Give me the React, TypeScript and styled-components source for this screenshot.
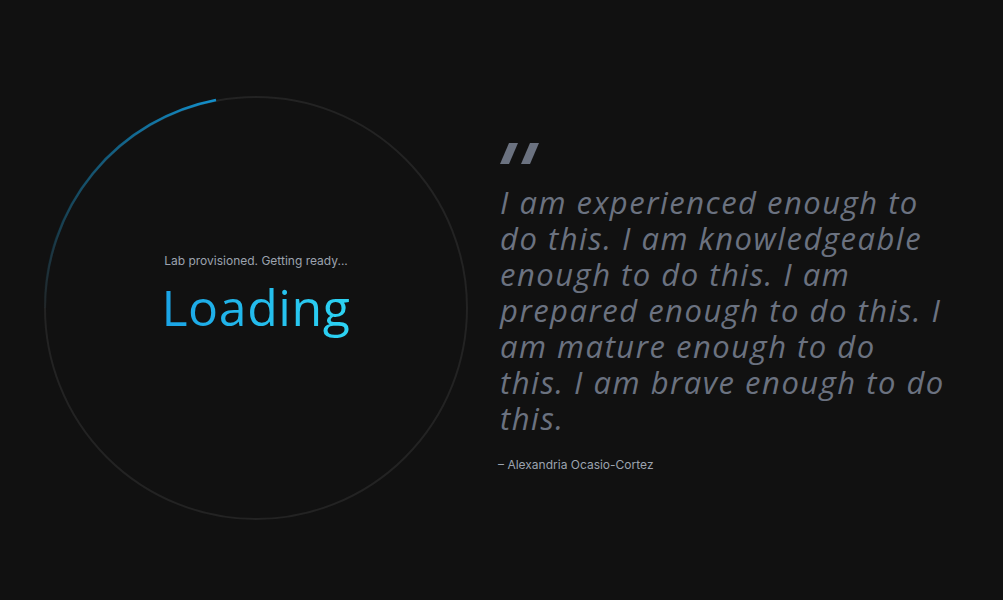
import React from "react";
import styled, { createGlobalStyle } from "styled-components";

const Global = createGlobalStyle`
  html, body { margin: 0; padding: 0; background: #111111; }
  body { font-family: Inter, "Noto Sans", sans-serif; }
`;

const Page = styled.main`
  box-sizing: border-box;
  height: 600px;
  padding: 16px 0 0 44px;
  display: flex;
  align-items: center;
  gap: 32px;
  background: #111111;
`;

const Ring = styled.div`
  position: relative;
  box-sizing: border-box;
  width: 424px;
  height: 424px;
  flex: none;
  border: 2px solid #232323;
  border-radius: 50%;
  display: flex;
  flex-direction: column;
  align-items: center;
  justify-content: center;
  padding-bottom: 28px;
`;

const Arc = styled.svg`
  position: absolute;
  inset: -2px;
  width: 424px;
  height: 424px;
  pointer-events: none;
`;

const Status = styled.p`
  margin: 0 0 10px;
  font-family: Inter, sans-serif;
  font-size: 12px;
  line-height: 16px;
  color: #9ca3af;
`;

const Title = styled.h1`
  margin: 0 0 -10px;
  padding-bottom: 10px;
  font-family: "Open Sans", sans-serif;
  font-weight: 400;
  font-size: 50px;
  letter-spacing: 0.6px;
  line-height: 56px;
  background: linear-gradient(90deg, #1aa3e6 0%, #2dd4f3 100%);
  -webkit-background-clip: text;
  background-clip: text;
  color: transparent;
`;

const QuoteBlock = styled.section`
  width: 448px;
  display: flex;
  flex-direction: column;
  align-items: flex-start;
`;

const QuoteMark = styled.svg`
  width: 40px;
  height: 21px;
  margin-bottom: 20px;
`;

const QuoteText = styled.blockquote`
  margin: 0;
  font-family: "Open Sans", sans-serif;
  font-style: italic;
  font-weight: 400;
  font-size: 31px;
  letter-spacing: 1.5px;
  line-height: 36px;
  color: #6b7280;
`;

const Author = styled.p`
  margin: 21px 0 0 -2px;
  font-family: Inter, sans-serif;
  font-size: 12px;
  line-height: 16px;
  color: #9ca3af;
`;

export default function App() {
  return (
    <>
      <Global />
      <Page>
        <Ring>
          <Arc viewBox="0 0 424 424">
            <defs>
              <linearGradient id="arcGrad" gradientUnits="userSpaceOnUse" x1="10" y1="230" x2="172" y2="4">
                <stop offset="0" stopColor="#0b6c96" stopOpacity="0" />
                <stop offset="0.35" stopColor="#0b6c96" stopOpacity="0.45" />
                <stop offset="1" stopColor="#1390cc" stopOpacity="1" />
              </linearGradient>
            </defs>
            <path d="M 1 212 A 211 211 0 0 1 172 4" fill="none" stroke="url(#arcGrad)" strokeWidth="2.5" />
          </Arc>
          <Status>Lab provisioned. Getting ready...</Status>
          <Title>Loading</Title>
        </Ring>
        <QuoteBlock>
          <QuoteMark viewBox="0 0 40 21">
            <polygon points="9,0 18,0 9,21 0,21" fill="#6b7280" />
            <polygon points="30,0 39,0 30,21 21,21" fill="#6b7280" />
          </QuoteMark>
          <QuoteText>
            I am experienced enough to do this. I am knowledgeable enough to do this. I am prepared enough to do this. I am mature enough to do this. I am brave enough to do this.
          </QuoteText>
          <Author>– Alexandria Ocasio-Cortez</Author>
        </QuoteBlock>
      </Page>
    </>
  );
}
